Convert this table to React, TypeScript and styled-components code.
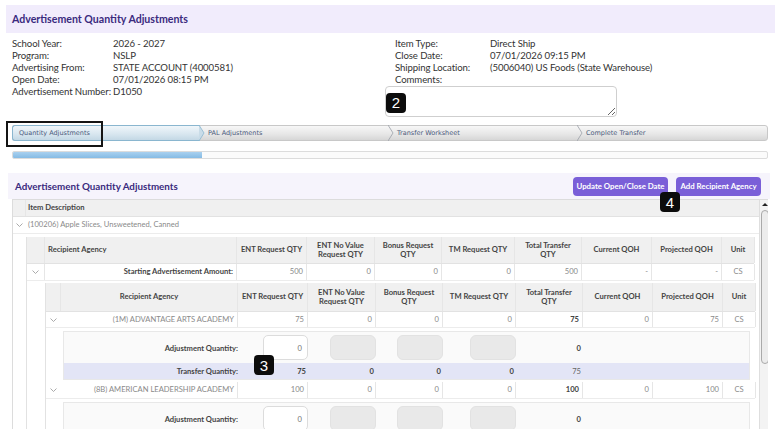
import React from "react";
import styled, { createGlobalStyle } from "styled-components";

const GlobalStyle = createGlobalStyle`
  html, body { margin: 0; padding: 0; overflow: hidden; background: #fff; }
  body { font-family: Lato, "Open Sans", sans-serif; color: #333; }
  * { box-sizing: border-box; }
`;

const T1 = "18px 192px 70px 68px 67px 73px 67px 70px 70px 33px";
const T2 = "15px 177px 70px 68px 67px 73px 67px 70px 70px 33px";
const TP = "175px 70px 68px 67px 73px 67px 1fr";

const Page = styled.div`
  position: relative;
  width: 780px;
  height: 429px;
  padding: 5px 5px 0 6px;
`;

const TitleBar = styled.div`
  height: 28px;
  background: #f1ecfc;
  display: flex;
  align-items: center;
  padding-left: 6px;
  font-size: 10.6px;
  font-weight: 700;
  color: #3a2a7e;
`;

const Info = styled.div`
  display: grid;
  grid-template-columns: 379px 1fr;
  margin-top: 5px;
  font-size: 9.6px;
  letter-spacing: -0.1px;
  line-height: 12px;
  color: #333;
  white-space: nowrap;
`;

const InfoCol = styled.div<{ $pad: number; $label: number }>`
  display: grid;
  grid-template-columns: ${(p) => p.$label}px 1fr;
  align-content: start;
  padding-left: ${(p) => p.$pad}px;
`;

const CommentWrap = styled.div`
  position: relative;
  grid-column: 1 / 3;
  margin-left: -10px;
  height: 31px;
`;

const Comment = styled.textarea`
  width: 232px;
  height: 31px;
  border: 1px solid #cfcfcf;
  border-radius: 4px;
  background: #fff;
  display: block;
`;

const Badge = styled.div<{ $x: number; $y: number }>`
  position: absolute;
  left: ${(p) => p.$x}px;
  top: ${(p) => p.$y}px;
  width: 20px;
  height: 20px;
  border-radius: 4px;
  background: #0c0c0c;
  color: #fff;
  font-family: "Liberation Sans", Arial, sans-serif;
  font-size: 15px;
  letter-spacing: 0;
  display: flex;
  align-items: center;
  justify-content: center;
  z-index: 5;
`;

const Stepper = styled.div`
  position: relative;
  display: flex;
  width: 756px;
  height: 16px;
  margin: 8px 0 0 6px;
  border: 1px solid #c8c8c8;
  border-radius: 3px;
  background: linear-gradient(#f7f7f7, #e6e6e6 60%, #d6d6d6);
`;

const Step = styled.div<{ $active?: boolean; $first?: boolean }>`
  flex: 0 0 ${(p) => (p.$first ? 188 : 189)}px;
  display: flex;
  align-items: center;
  height: ${(p) => (p.$active ? 16 : 14)}px;
  margin: ${(p) => (p.$active ? "-1px 0 -1px -1px" : "0")};
  padding-left: ${(p) => (p.$first ? 6 : 0)}px;
  border: ${(p) => (p.$active ? "1px solid #8ab6cf" : "none")};
  border-right: none;
  border-radius: ${(p) => (p.$active ? "3px 0 0 3px" : "0")};
  background: ${(p) => (p.$active ? "linear-gradient(#f0f6fa, #d9e7f0 55%, #c3d8e5)" : "transparent")};
  font-family: "DejaVu Sans", Verdana, sans-serif;
  font-size: 6.5px;
  color: #4b5a7c;
  white-space: nowrap;
`;

const StepLabel = styled.span`
  margin-left: 2px;
`;

const Highlight = styled.div`
  position: absolute;
  left: -7px;
  top: -5px;
  width: 97px;
  height: 26px;
  border: 2px solid #151515;
  pointer-events: none;
`;

const Progress = styled.div`
  width: 756px;
  height: 8px;
  margin: 10px 0 0 6px;
  border: 1px solid #dcdcdc;
  border-radius: 2px;
  background: #fbfbfb;
  overflow: hidden;
`;

const ProgressFill = styled.div`
  height: 100%;
  background: linear-gradient(#a9d0ef, #86bbe4);
`;

const Band = styled.div`
  position: relative;
  display: flex;
  align-items: center;
  justify-content: space-between;
  width: 762px;
  height: 26px;
  margin: 14px 0 0 2px;
  padding: 0 9px 0 7px;
  background: #f6f4fc;
  z-index: 3;
`;

const BandTitle = styled.div`
  font-size: 9.8px;
  font-weight: 700;
  color: #3a2a7e;
`;

const Buttons = styled.div`
  display: flex;
  gap: 8px;
`;

const Button = styled.button<{ $w: number }>`
  width: ${(p) => p.$w}px;
  height: 19px;
  border: none;
  border-radius: 4px;
  background: #7a5fd8;
  color: #fff;
  font-family: Lato, sans-serif;
  font-size: 7.8px;
  font-weight: 700;
  padding: 0;
`;

const Grid = styled.div`
  display: flex;
  width: 756px;
  height: 240px;
  margin-left: 6px;
  border-left: 1px solid #dcdcdc;
  border-top: 1px solid #dcdcdc;
  overflow: hidden;
`;

const Main = styled.div`
  width: 746px;
  flex: 0 0 746px;
`;

const Scroll = styled.div`
  flex: 0 0 10px;
  background: #f3f3f3;
  border-left: 1px solid #dedede;
  display: flex;
  flex-direction: column;
  align-items: center;
`;

const ScrollArrow = styled.div`
  margin-top: 3px;
  width: 0;
  height: 0;
  border-left: 3px solid transparent;
  border-right: 3px solid transparent;
  border-bottom: 3px solid #222;
`;

const Thumb = styled.div`
  margin-top: 4px;
  width: 8px;
  height: 154px;
  border: 1px solid #aaa;
  border-radius: 4px;
  background: #ececec;
`;

const Row = styled.div<{ $cols: string; $h: number; $head?: boolean; $bg?: string }>`
  display: grid;
  grid-template-columns: ${(p) => p.$cols};
  height: ${(p) => p.$h}px;
  background: ${(p) => p.$bg ?? (p.$head ? "#f0f0f0" : "#fff")};
  border-bottom: 1px solid ${(p) => (p.$head ? "#e2e2e2" : "#ececec")};
  font-size: 7.6px;
`;

const Cell = styled.div<{ $align?: "left" | "right" | "center"; $bold?: boolean; $dark?: boolean; $line?: boolean }>`
  display: flex;
  align-items: center;
  justify-content: ${(p) => (p.$align === "right" ? "flex-end" : p.$align === "center" ? "center" : "flex-start")};
  text-align: ${(p) => p.$align ?? "left"};
  padding: 0 3px;
  line-height: 9.5px;
  font-weight: ${(p) => (p.$bold ? 700 : 400)};
  color: ${(p) => (p.$dark ? "#444" : "#8a8a8a")};
  border-right: ${(p) => (p.$line === false ? "none" : "1px solid #e6e6e6")};
  white-space: pre-line;
  min-width: 0;
`;

const Detail = styled.div`
  padding: 3px 0 0 13px;
`;

const Table = styled.div<{ $w: number; $ml?: number; $mt?: number }>`
  width: ${(p) => p.$w}px;
  margin-left: ${(p) => p.$ml ?? 0}px;
  margin-top: ${(p) => p.$mt ?? 0}px;
  border-left: 1px solid #e2e2e2;
`;

const Panel = styled.div`
  position: relative;
  width: 687px;
  margin: 3px 0 2px 17px;
  border: 1px solid #e8e8e8;
  background: #fafafa;
`;

const PanelRow = styled.div<{ $h: number; $bg?: string }>`
  display: grid;
  grid-template-columns: ${TP};
  height: ${(p) => p.$h}px;
  background: ${(p) => p.$bg ?? "transparent"};
  font-size: 7.6px;
`;

const PanelCell = styled.div<{ $bold?: boolean; $label?: boolean }>`
  display: flex;
  align-items: center;
  justify-content: flex-end;
  padding-right: ${(p) => (p.$label ? 1 : 3)}px;
  font-weight: ${(p) => (p.$bold ? 700 : 400)};
  color: ${(p) => (p.$bold ? "#444" : "#666")};
`;

const QtyInput = styled.div`
  width: 45px;
  height: 25px;
  margin-right: -2px;
  border: 1px solid #dcdcdc;
  border-radius: 5px;
  background: #fff;
  display: flex;
  align-items: center;
  justify-content: flex-end;
  padding-right: 5px;
  color: #777;
  font-weight: 400;
`;

const Disabled = styled.div`
  width: 46px;
  height: 25px;
  margin-right: -2px;
  border: 1px solid #e2e2e2;
  border-radius: 6px;
  background: #e9e9e9;
`;

const Chev = () => (
  <svg width="7" height="4" viewBox="0 0 7 4">
    <polyline points="0.5,0.5 3.5,3.5 6.5,0.5" fill="none" stroke="#a0a0a0" strokeWidth="0.9" />
  </svg>
);

const StepChevron = ({ prevActive }: { prevActive?: boolean }) => (
  <svg width="7" height="16" viewBox="0 0 7 16" style={{ marginTop: prevActive ? 0 : -1, marginLeft: -1 }}>
    {prevActive && <polygon points="0,0 5,8 0,16" fill="#c9dce8" />}
    <polyline points="0,0 5,8 0,16" fill="none" stroke={prevActive ? "#8ab6cf" : "#9aa0a8"} strokeWidth="0.8" />
  </svg>
);

type Vals = [string, string, string, string, string, string, string, string];

const heads = [
  "ENT Request QTY",
  "ENT No Value\nRequest QTY",
  "Bonus Request\nQTY",
  "TM Request QTY",
  "Total Transfer\nQTY",
  "Current QOH",
  "Projected QOH",
  "Unit",
];

const HeadCells = () => (
  <>
    {heads.map((h) => (
      <Cell key={h} $align="center" $bold $dark>
        {h}
      </Cell>
    ))}
  </>
);

const ValueCells = ({ v, boldTotal }: { v: Vals; boldTotal?: boolean }) => (
  <>
    {v.slice(0, 7).map((x, i) => (
      <Cell key={i} $align="right" $bold={boldTotal && i === 4} $dark={boldTotal && i === 4}>
        {x}
      </Cell>
    ))}
    <Cell $align="center">{v[7]}</Cell>
  </>
);

const AdjustPanel = ({ transfer, badge }: { transfer: string; badge?: boolean }) => (
  <Panel>
    {badge && <Badge $x={190} $y={23}>3</Badge>}
    <PanelRow $h={31}>
      <PanelCell $label $bold>Adjustment Quantity:</PanelCell>
      <PanelCell>
        <QtyInput>0</QtyInput>
      </PanelCell>
      <PanelCell>
        <Disabled />
      </PanelCell>
      <PanelCell>
        <Disabled />
      </PanelCell>
      <PanelCell>
        <Disabled />
      </PanelCell>
      <PanelCell $bold>0</PanelCell>
      <PanelCell />
    </PanelRow>
    <PanelRow $h={16} $bg="#e3e5f6">
      <PanelCell $label $bold>Transfer Quantity:</PanelCell>
      <PanelCell $bold>{transfer}</PanelCell>
      <PanelCell $bold>0</PanelCell>
      <PanelCell $bold>0</PanelCell>
      <PanelCell $bold>0</PanelCell>
      <PanelCell>{transfer}</PanelCell>
      <PanelCell />
    </PanelRow>
  </Panel>
);

export default function App() {
  return (
    <Page>
      <GlobalStyle />
      <TitleBar>Advertisement Quantity Adjustments</TitleBar>
      <Info>
        <InfoCol $pad={6} $label={101}>
          <span>School Year:</span>
          <span>2026 - 2027</span>
          <span>Program:</span>
          <span>NSLP</span>
          <span>Advertising From:</span>
          <span>STATE ACCOUNT (4000581)</span>
          <span>Open Date:</span>
          <span>07/01/2026 08:15 PM</span>
          <span>Advertisement Number:</span>
          <span>D1050</span>
        </InfoCol>
        <InfoCol $pad={10} $label={95}>
          <span>Item Type:</span>
          <span>Direct Ship</span>
          <span>Close Date:</span>
          <span>07/01/2026 09:15 PM</span>
          <span>Shipping Location:</span>
          <span>(5006040) US Foods (State Warehouse)</span>
          <span>Comments:</span>
          <span />
          <CommentWrap>
            <Comment readOnly defaultValue="" />
            <Badge $x={1} $y={7}>2</Badge>
          </CommentWrap>
        </InfoCol>
      </Info>

      <Stepper>
        <Step $active $first>
          Quantity Adjustments
        </Step>
        <Step>
          <StepChevron prevActive />
          <StepLabel>PAL Adjustments</StepLabel>
        </Step>
        <Step>
          <StepChevron />
          <StepLabel>Transfer Worksheet</StepLabel>
        </Step>
        <Step>
          <StepChevron />
          <StepLabel>Complete Transfer</StepLabel>
        </Step>
        <Highlight />
      </Stepper>

      <Progress>
        <ProgressFill style={{ width: "25%" }} />
      </Progress>

      <Band>
        <BandTitle>Advertisement Quantity Adjustments</BandTitle>
        <Buttons>
          <Button $w={95}>Update Open/Close Date</Button>
          <Button $w={85}>Add Recipient Agency</Button>
        </Buttons>
        <Badge $x={652} $y={19}>4</Badge>
      </Band>

      <Grid>
        <Main>
          <Row $cols="13px 1fr" $h={17} $head>
            <Cell $line />
            <Cell $bold $dark $line={false} style={{ paddingLeft: 2 }}>
              Item Description
            </Cell>
          </Row>
          <Row $cols="13px 1fr" $h={17}>
            <Cell $align="center" $line={false}>
              <Chev />
            </Cell>
            <Cell $line={false} style={{ paddingLeft: 2 }}>
              (100206) Apple Slices, Unsweetened, Canned
            </Cell>
          </Row>
          <Detail>
            <Table $w={728}>
              <Row $cols={T1} $h={27} $head>
                <Cell />
                <Cell $bold $dark>
                  Recipient Agency
                </Cell>
                <HeadCells />
              </Row>
              <Row $cols={T1} $h={17}>
                <Cell $align="center">
                  <Chev />
                </Cell>
                <Cell $align="right" $bold $dark>
                  Starting Advertisement Amount:
                </Cell>
                <ValueCells v={["500", "0", "0", "0", "500", "-", "-", "CS"]} />
              </Row>
              <Table $w={710} $ml={18} $mt={2}>
                <Row $cols={T2} $h={29} $head>
                  <Cell />
                  <Cell $align="center" $bold $dark>
                    Recipient Agency
                  </Cell>
                  <HeadCells />
                </Row>
                <Row $cols={T2} $h={16}>
                  <Cell $align="center" $line={false}>
                    <Chev />
                  </Cell>
                  <Cell $align="right">(1M) ADVANTAGE ARTS ACADEMY</Cell>
                  <ValueCells boldTotal v={["75", "0", "0", "0", "75", "0", "75", "CS"]} />
                </Row>
                <AdjustPanel transfer="75" badge />
                <Row $cols={T2} $h={17}>
                  <Cell $align="center" $line={false}>
                    <Chev />
                  </Cell>
                  <Cell $align="right">(8B) AMERICAN LEADERSHIP ACADEMY</Cell>
                  <ValueCells boldTotal v={["100", "0", "0", "0", "100", "0", "100", "CS"]} />
                </Row>
                <AdjustPanel transfer="100" />
              </Table>
            </Table>
          </Detail>
        </Main>
        <Scroll>
          <ScrollArrow />
          <Thumb />
        </Scroll>
      </Grid>
    </Page>
  );
}
